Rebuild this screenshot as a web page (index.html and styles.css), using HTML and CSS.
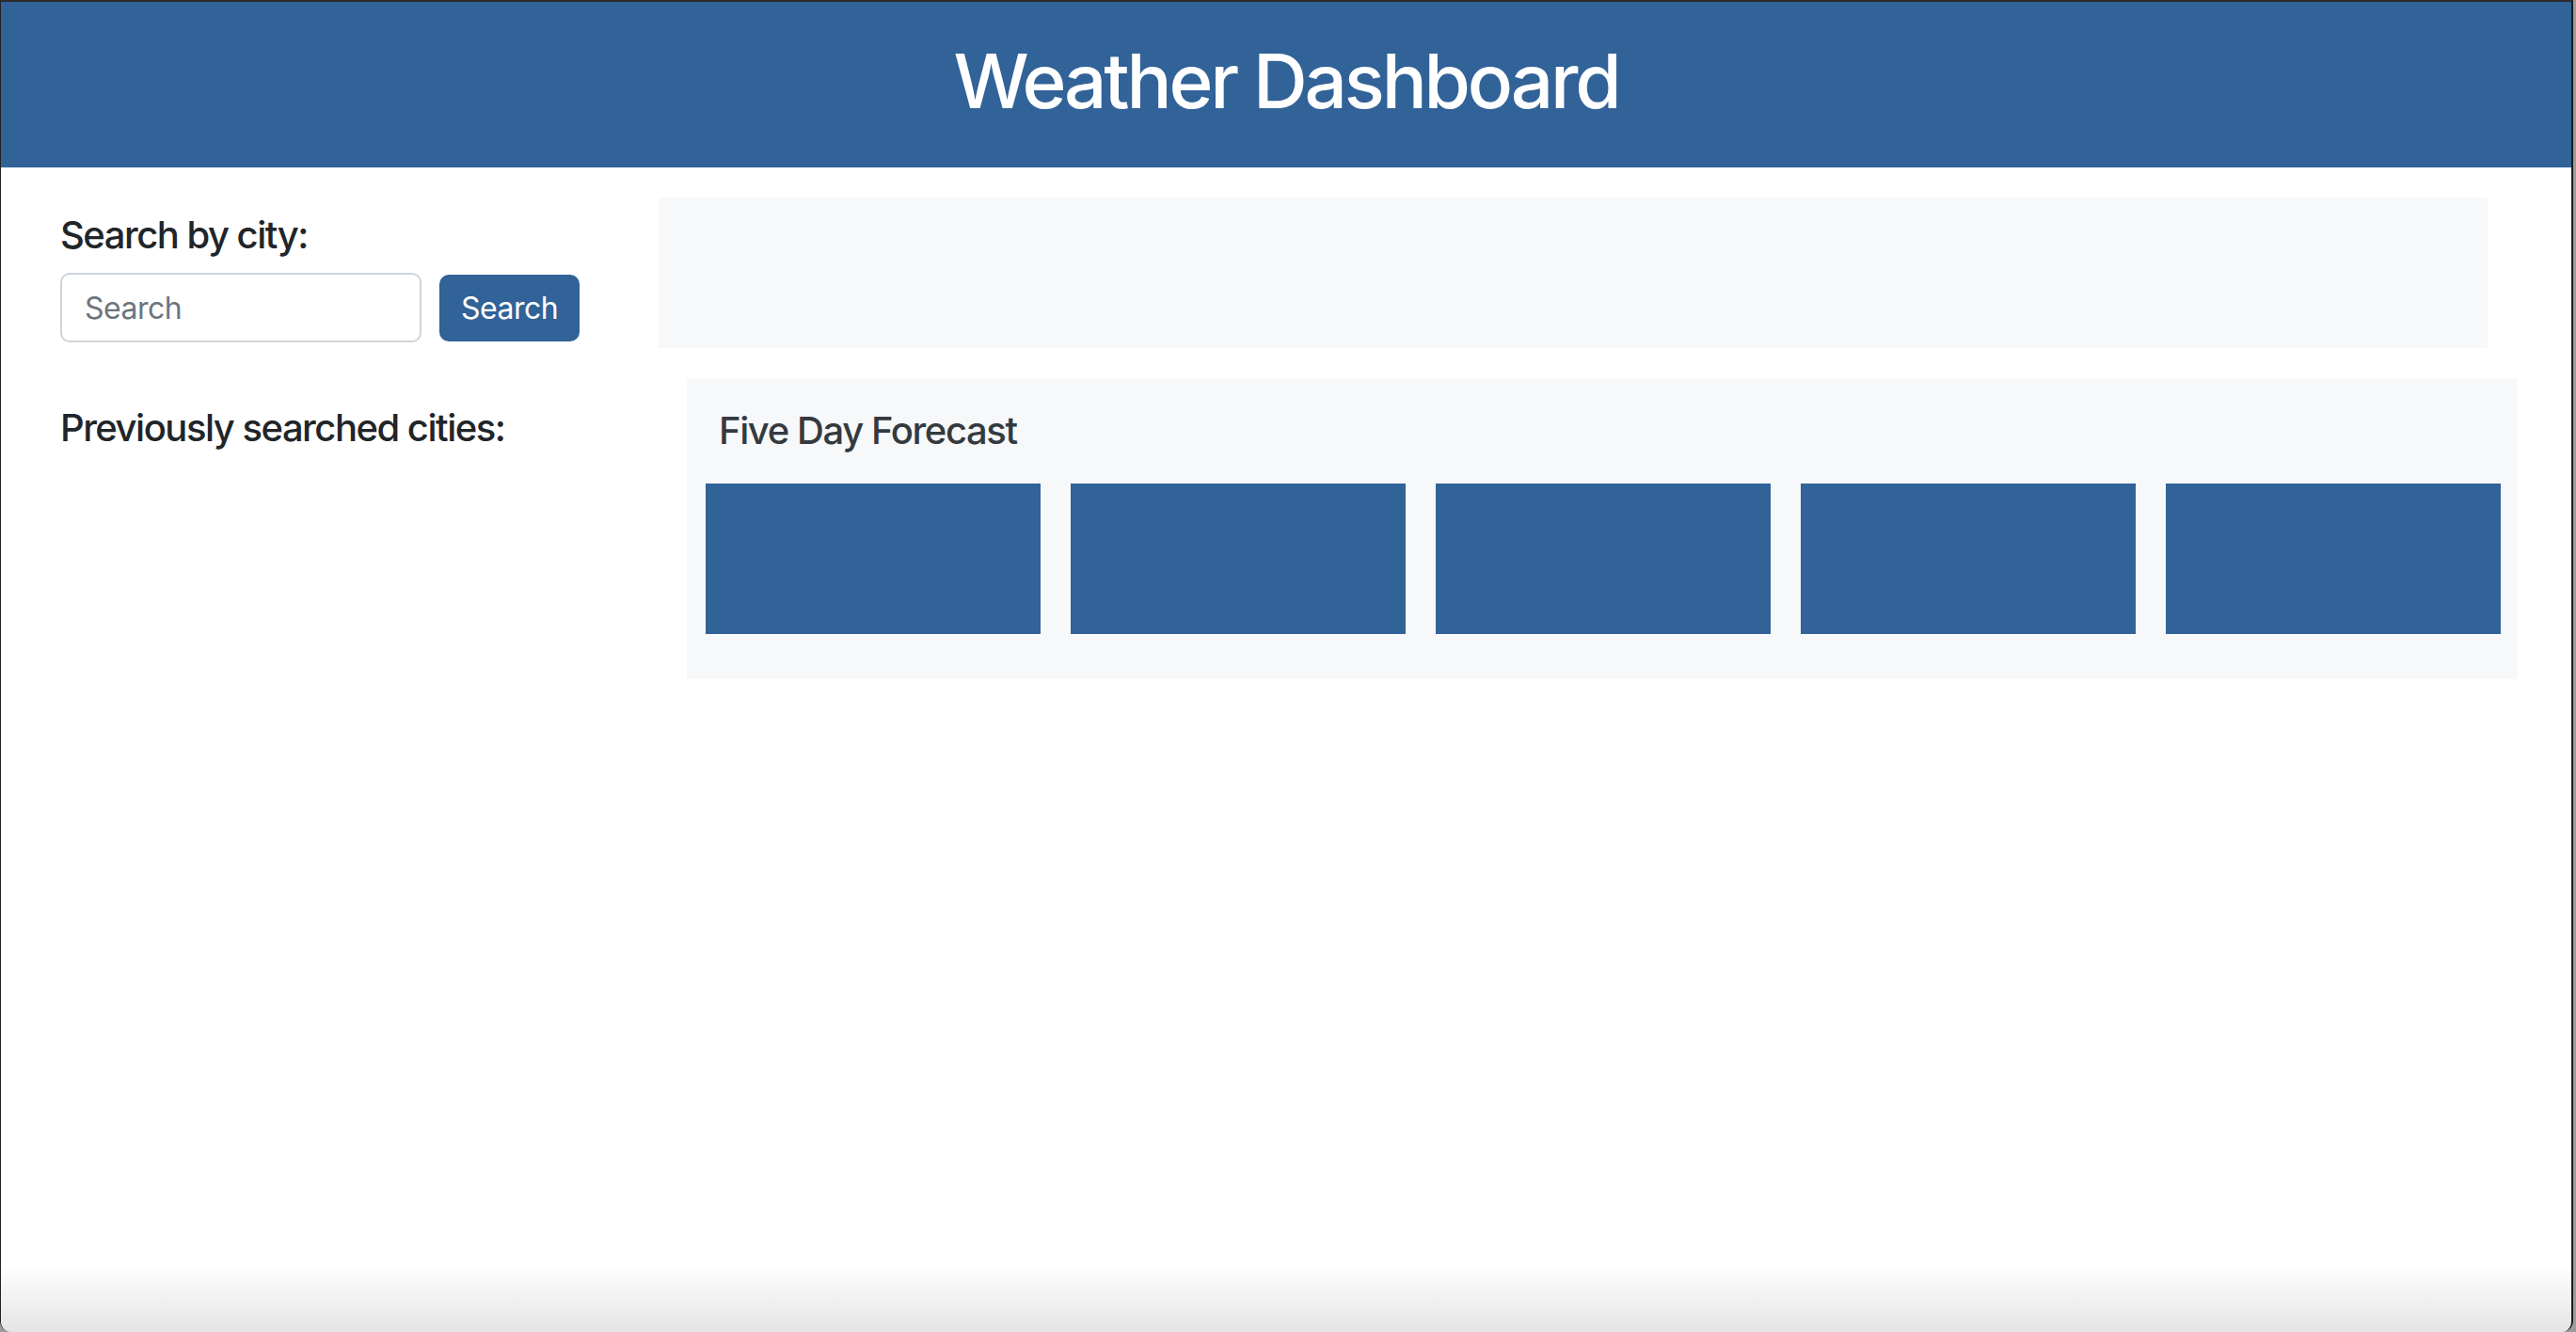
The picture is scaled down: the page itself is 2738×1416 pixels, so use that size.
FILE: index.html
```html
<!DOCTYPE html>
<html lang="en">
<head>
<meta charset="utf-8">
<title>Weather Dashboard</title>
<link rel="stylesheet" href="styles.css">
</head>
<body>
<div class="frame">
  <header class="topbar">
    <h1 class="title">Weather Dashboard</h1>
  </header>
  <main class="content">
    <section class="row row-search">
      <div class="side">
        <h5 class="label">Search by city:</h5>
        <form class="search-form">
          <input class="search-input" type="text" placeholder="Search">
          <button class="search-btn" type="button">Search</button>
        </form>
      </div>
      <div class="current-box"></div>
    </section>
    <section class="row row-forecast">
      <div class="side side-history">
        <h5 class="label">Previously searched cities:</h5>
      </div>
      <div class="forecast-box">
        <h5 class="forecast-title">Five Day Forecast</h5>
        <div class="cards">
          <div class="card"></div>
          <div class="card"></div>
          <div class="card"></div>
          <div class="card"></div>
          <div class="card"></div>
        </div>
      </div>
    </section>
  </main>
  <div class="bottom-fade"></div>
</div>
</body>
</html>
```

FILE: styles.css
```css
* { box-sizing: border-box; }

html, body {
  margin: 0;
  height: 100%;
}

body {
  background: #9c9c9c;
  font-family: Inter, "Noto Sans", sans-serif;
  color: #212529;
  overflow: hidden;
}

.frame {
  position: relative;
  width: calc(100% - 3px);
  height: 1416px;
  background: #ffffff;
  border-top: 2px solid #2a2a2a;
  border-left: 1px solid #222;
  border-right: 2px solid #1c1c1c;
  border-radius: 0 0 12px 12px;
  overflow: hidden;
}

.topbar {
  height: 176px;
  background: #316298;
  display: flex;
  align-items: center;
  justify-content: center;
  padding-bottom: 8px;
}

.title {
  margin: 0;
  color: #ffffff;
  font-size: 80px;
  font-weight: 500;
  line-height: 1.2;
  letter-spacing: -3.2px;
}

.content {
  padding-top: 32px;
}

.row {
  display: flex;
}

.side {
  padding-left: 63px;
}

.row-search .side {
  width: 699px;
  padding-top: 16px;
}

.side-history {
  width: 729px;
  padding-top: 29px;
}

.label {
  margin: 0;
  font-size: 40px;
  font-weight: 500;
  line-height: 1.2;
  letter-spacing: -1.5px;
  color: #212529;
}

.search-form {
  display: flex;
  gap: 19px;
  margin-top: 16px;
  align-items: center;
}

.search-input {
  width: 384px;
  height: 74px;
  border: 2px solid #ced4da;
  border-radius: 10px;
  padding: 0 24px;
  font-family: inherit;
  font-size: 32px;
  letter-spacing: -0.5px;
  color: #212529;
  background: #fff;
  outline: none;
}

.search-input::placeholder {
  color: #6c757d;
}

.search-btn {
  width: 149px;
  height: 71px;
  border: none;
  border-radius: 10px;
  background: #316298;
  color: #ffffff;
  font-family: inherit;
  font-size: 32px;
  letter-spacing: -0.5px;
  padding: 0;
}

.current-box {
  width: 1944px;
  height: 160px;
  background: #f7f8fa;
}

.row-forecast {
  margin-top: 32px;
}

.forecast-box {
  width: 1946px;
  height: 320px;
  background: #f7f8fa;
  padding: 32px 18px 0 20px;
}

.forecast-title {
  margin: 0 0 32px 14px;
  font-size: 40px;
  font-weight: 500;
  line-height: 1.2;
  letter-spacing: -1.4px;
  color: #343a40;
}

.cards {
  display: grid;
  grid-template-columns: repeat(5, 356px);
  column-gap: 32px;
}

.card {
  height: 160px;
  background: #316298;
}

.bottom-fade {
  position: absolute;
  left: 0;
  right: 0;
  bottom: 0;
  height: 72px;
  background: linear-gradient(to bottom, rgba(230,230,230,0) 0%, rgba(228,228,228,1) 100%);
  pointer-events: none;
}
```
